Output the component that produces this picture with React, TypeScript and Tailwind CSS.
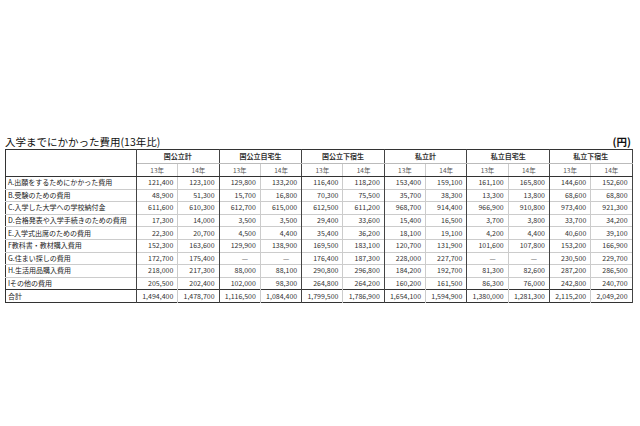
import React from "react";

const groups = ["国公立計", "国公立自宅生", "国公立下宿生", "私立計", "私立自宅生", "私立下宿生"];

const rows: [string, string[]][] = [
  ["A.出願をするためにかかった費用", ["121,400", "123,100", "129,800", "133,200", "116,400", "118,200", "153,400", "159,100", "161,100", "165,800", "144,600", "152,600"]],
  ["B.受験のための費用", ["48,900", "51,300", "15,700", "16,800", "70,300", "75,500", "35,700", "38,300", "13,300", "13,800", "68,600", "68,800"]],
  ["C.入学した大学への学校納付金", ["611,600", "610,300", "612,700", "615,000", "612,500", "611,200", "968,700", "914,400", "966,900", "910,800", "973,400", "921,300"]],
  ["D.合格発表や入学手続きのための費用", ["17,300", "14,000", "3,500", "3,500", "29,400", "33,600", "15,400", "16,500", "3,700", "3,800", "33,700", "34,200"]],
  ["E.入学式出席のための費用", ["22,300", "20,700", "4,500", "4,400", "35,400", "36,200", "18,100", "19,100", "4,200", "4,400", "40,600", "39,100"]],
  ["F教科書・教材購入費用", ["152,300", "163,600", "129,900", "138,900", "169,500", "183,100", "120,700", "131,900", "101,600", "107,800", "153,200", "166,900"]],
  ["G.住まい探しの費用", ["172,700", "175,400", "—", "—", "176,400", "187,300", "228,000", "227,700", "—", "—", "230,500", "229,700"]],
  ["H.生活用品購入費用", ["218,000", "217,300", "88,000", "88,100", "290,800", "296,800", "184,200", "192,700", "81,300", "82,600", "287,200", "286,500"]],
  ["Iその他の費用", ["205,500", "202,400", "102,000", "98,300", "264,800", "264,200", "160,200", "161,500", "86,300", "76,000", "242,800", "240,700"]],
];
const total = ["1,494,400", "1,478,700", "1,116,500", "1,084,400", "1,799,500", "1,786,900", "1,654,100", "1,594,900", "1,380,000", "1,281,300", "2,115,200", "2,049,200"];

const font = { fontFamily: '"Noto Sans CJK JP", "Noto Sans", sans-serif' };

export default function App() {
  return (
    <div className="w-[640px] h-[426px] bg-white text-[#222]" style={font}>
      <div className="pt-[135px] pl-[5px] pr-[8px]">
        <div className="flex items-end justify-between h-[13px] leading-[13px]">
          <span className="text-[10.5px] font-normal text-[#111]">入学までにかかった費用(13年比)</span>
          <span className="text-[10.5px] font-bold text-[#111] mr-[1px]">(円)</span>
        </div>
        <table className="mt-[1px] border-collapse border-[1.5px] border-[#333] table-fixed w-[627px] text-[7px] leading-none">
          <colgroup>
            <col className="w-[131px]" />
            {Array.from({ length: 12 }).map((_, i) => (
              <col key={i} className="w-[41.3px]" />
            ))}
          </colgroup>
          <thead>
            <tr className="h-[14px]">
              <th rowSpan={2} className="border-r border-[#444] border-b-[1.5px] border-b-[#333]"></th>
              {groups.map((g) => (
                <th key={g} colSpan={2} className="border-r border-[#444] border-b border-b-[#bbb] font-bold text-[7px] text-center text-[#333]">
                  {g}
                </th>
              ))}
            </tr>
            <tr className="h-[13px]">
              {groups.map((g) => (
                <React.Fragment key={g}>
                  <th className="border-r border-[#ccc] border-b-[1.5px] border-b-[#333] font-normal text-[6.5px] text-center text-[#555]">13年</th>
                  <th className="border-r border-[#444] border-b-[1.5px] border-b-[#333] font-normal text-[6.5px] text-center text-[#555]">14年</th>
                </React.Fragment>
              ))}
            </tr>
          </thead>
          <tbody>
            {rows.map(([label, vals], ri) => (
              <tr key={label} className={ri === rows.length - 1 ? "h-[12.6px] border-b-[1.5px] border-b-[#333]" : "h-[12.6px] border-b border-b-[#ccc]"}>
                <td className="border-r border-[#444] pl-[2px] text-left whitespace-nowrap text-[#222]">{label}</td>
                {vals.map((v, i) => (
                  <td key={i} className={(i % 2 === 0 ? "border-r border-[#ccc] " : "border-r border-[#444] ") + "text-right pr-[4px] text-[#333]"}>
                    {v === "—" ? <span className="inline-block pr-[8px] text-[#555]">—</span> : v}
                  </td>
                ))}
              </tr>
            ))}
            <tr className="h-[12.6px]">
              <td className="border-r border-[#444] pl-[2px] text-left text-[#222]">合計</td>
              {total.map((v, i) => (
                <td key={i} className={(i % 2 === 0 ? "border-r border-[#ccc] " : "border-r border-[#444] ") + "text-right pr-[4px] text-[#333]"}>
                  {v}
                </td>
              ))}
            </tr>
          </tbody>
        </table>
      </div>
    </div>
  );
}
